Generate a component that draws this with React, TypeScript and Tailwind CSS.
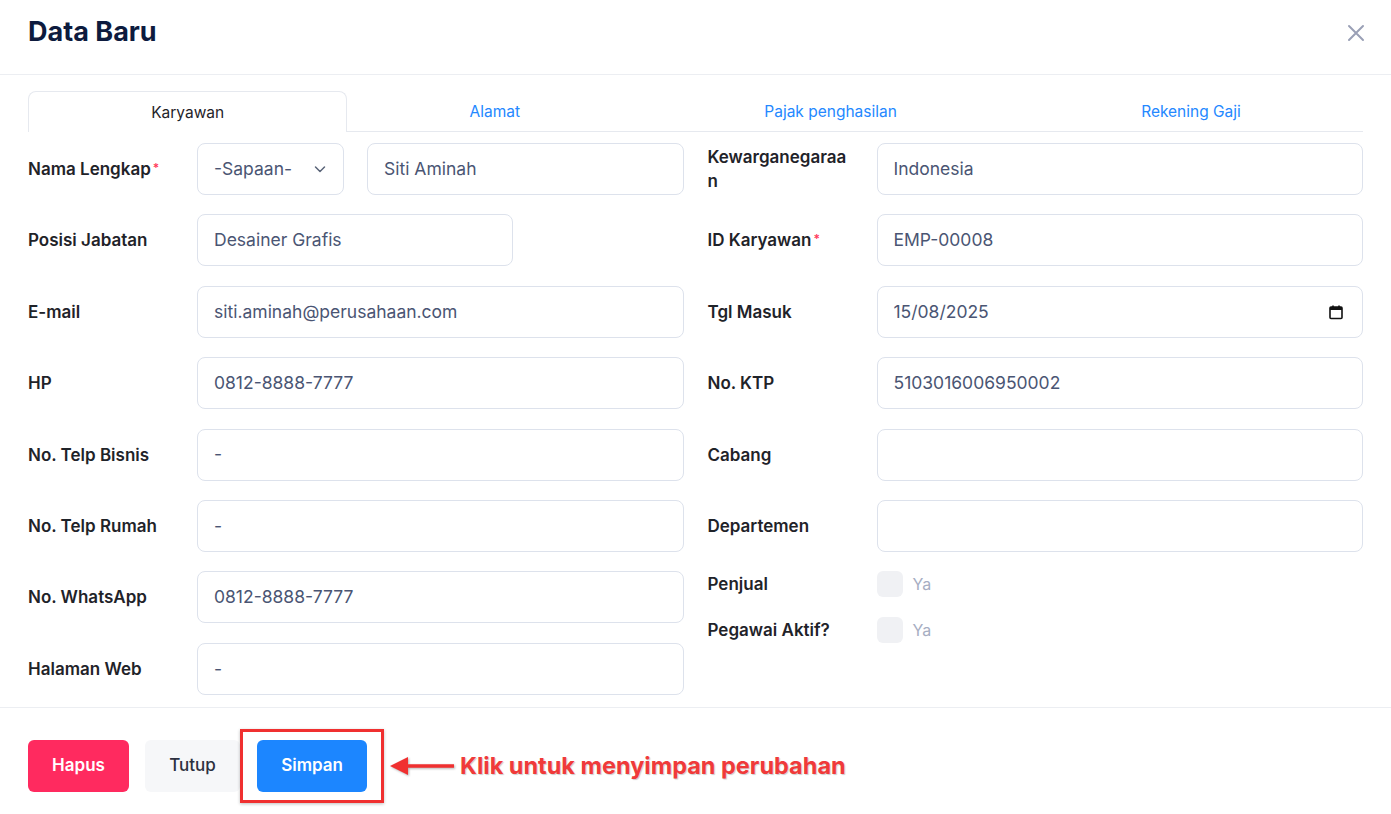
import React from "react";

const inputCls =
  "h-[52px] flex items-center rounded-[8px] border border-[#dde2ec] bg-white px-4 text-[17.5px] text-[#4a5573]";

function Label({ children, req }: { children: React.ReactNode; req?: boolean }) {
  return (
    <div className="w-[169px] shrink-0 pr-[22px] text-[17px] leading-[24px] font-semibold text-[#1f2329] break-all">
      {children}
      {req && <sup className="text-[#ff3b5c] text-[12px] ml-[2px] relative -top-[3px]">*</sup>}
    </div>
  );
}

function Field({ label, value, req, w }: { label: string; value: string; req?: boolean; w?: string }) {
  return (
    <div className="flex items-center h-[52px]">
      <Label req={req}>{label}</Label>
      <div className={`${inputCls} ${w ?? "flex-1"}`}>{value}</div>
    </div>
  );
}

function Check({ label }: { label: string }) {
  return (
    <div className="flex items-center h-[26px]">
      <Label>{label}</Label>
      <div className="w-[26px] h-[26px] rounded-[6px] bg-[#f0f1f4]" />
      <span className="ml-[10px] text-[16px] text-[#a6adc2]">Ya</span>
    </div>
  );
}

export default function App() {
  return (
    <div className="w-[1391px] h-[814px] bg-white overflow-hidden" style={{ fontFamily: "Inter, 'Noto Sans', sans-serif" }}>
      {/* header */}
      <div className="h-[75px] border-b border-[#eceef2] flex items-start justify-between px-[28px] pt-[14px]">
        <h1 className="text-[27px] leading-[36px] font-bold text-[#0d1b3e]">Data Baru</h1>
        <svg width="18" height="18" viewBox="0 0 18 18" className="mt-[10px] mr-[-2px]">
          <path d="M2 2 L16 16 M16 2 L2 16" stroke="#9aa0b6" strokeWidth="2" strokeLinecap="round" />
        </svg>
      </div>

      {/* tabs */}
      <div className="px-[28px] mt-[16px]">
        <div className="flex h-[41px] border-b border-[#e6e9ef]">
          <div className="flex-auto flex items-center justify-center pt-[2px] text-[15.5px] text-[#1f2329] border border-[#e6e9ef] border-b-0 rounded-t-[8px] bg-white -mb-px">
            Karyawan
          </div>
          <div className="flex-auto flex items-center justify-center pt-[2px] text-[15.5px] text-[#2488ff]">Alamat</div>
          <div className="flex-auto flex items-center justify-center pt-[2px] text-[15.5px] text-[#2488ff]">Pajak penghasilan</div>
          <div className="flex-auto flex items-center justify-center pt-[2px] text-[15.5px] text-[#2488ff]">Rekening Gaji</div>
        </div>
      </div>

      {/* form */}
      <div className="px-[28px] pt-[11px] grid grid-cols-2 gap-x-[24px] h-[575px]">
        <div className="flex flex-col gap-[19.4px]">
          <div className="flex items-center h-[52px]">
            <Label req>Nama Lengkap</Label>
            <div className={`${inputCls} w-[147px] justify-between`}>
              <span>-Sapaan-</span>
              <svg width="14" height="14" viewBox="0 0 14 14">
                <path d="M2.5 5 L7 9.5 L11.5 5" fill="none" stroke="#5a6478" strokeWidth="1.5" strokeLinecap="round" strokeLinejoin="round" />
              </svg>
            </div>
            <div className={`${inputCls} flex-1 ml-[23px]`}>Siti Aminah</div>
          </div>
          <Field label="Posisi Jabatan" value="Desainer Grafis" w="w-[316px]" />
          <Field label="E-mail" value="siti.aminah@perusahaan.com" />
          <Field label="HP" value="0812-8888-7777" />
          <Field label="No. Telp Bisnis" value="-" />
          <Field label="No. Telp Rumah" value="-" />
          <Field label="No. WhatsApp" value="0812-8888-7777" />
          <Field label="Halaman Web" value="-" />
        </div>
        <div className="flex flex-col gap-[19.4px]">
          <Field label="Kewarganegaraan" value="Indonesia" />
          <Field label="ID Karyawan" value="EMP-00008" req />
          <div className="flex items-center h-[52px]">
            <Label>Tgl Masuk</Label>
            <div className={`${inputCls} flex-1 justify-between pr-[18px]`}>
              <span>15/08/2025</span>
              <svg width="16" height="16" viewBox="0 0 16 16">
                <rect x="2" y="3" width="12" height="11.5" rx="1" fill="none" stroke="#111" strokeWidth="1.6" />
                <rect x="2" y="3" width="12" height="3" fill="#111" />
                <path d="M5 1.5 V3.5 M11 1.5 V3.5" stroke="#111" strokeWidth="1.6" />
              </svg>
            </div>
          </div>
          <Field label="No. KTP" value="5103016006950002" />
          <Field label="Cabang" value="" />
          <Field label="Departemen" value="" />
          <Check label="Penjual" />
          <Check label="Pegawai Aktif?" />
        </div>
      </div>

      {/* footer */}
      <div className="border-t border-[#eceef2] px-[28px] pt-[21px] flex items-center">
        <button className="h-[52px] w-[101px] rounded-[6px] bg-[#ff2a5f] text-white text-[17px] font-semibold">Hapus</button>
        <button className="h-[52px] w-[95px] ml-[16px] rounded-[6px] bg-[#f6f7f9] text-[#2c3040] text-[17px] font-medium">Tutup</button>
        <div className="border-[3px] border-[#f03030] px-[14px] py-[8px] shadow-[0_1px_3px_rgba(0,0,0,0.25)]">
          <button className="h-[52px] w-[110px] rounded-[6px] bg-[#1c86ff] text-white text-[17px] font-semibold block">Simpan</button>
        </div>
        <svg width="68" height="24" viewBox="0 0 68 24" className="ml-[4px]" style={{ filter: "drop-shadow(1px 1px 1px rgba(0,0,0,0.3))" }}>
          <path d="M66 12 H18" stroke="#f03030" strokeWidth="3.5" />
          <path d="M2 12 L20 3 L20 21 Z" fill="#f03030" />
        </svg>
        <span className="ml-[4px] text-[23.5px] font-bold text-[#f03a3a]" style={{ textShadow: "1px 1px 1px rgba(0,0,0,0.2)" }}>
          Klik untuk menyimpan perubahan
        </span>
      </div>
    </div>
  );
}
